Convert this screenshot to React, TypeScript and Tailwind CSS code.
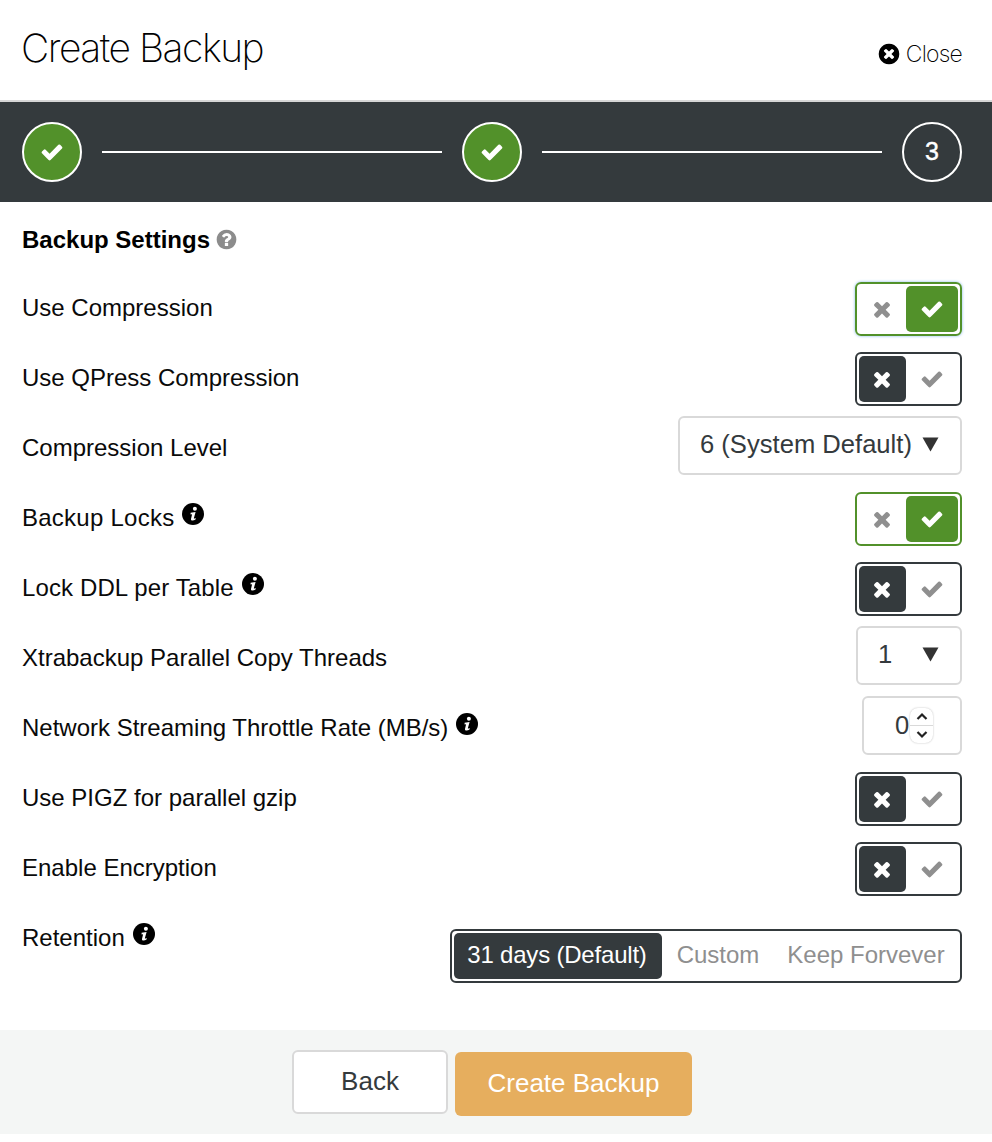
import React from 'react';

const CHECK = 'M1671 566q0 40-28 68l-724 724-136 136q-28 28-68 28t-68-28l-136-136-362-362q-28-28-28-68t28-68l136-136q28-28 68-28t68 28l294 295 656-657q28-28 68-28t68 28l136 136q28 28 28 68z';
const TIMES = 'M1490 1322q0 40-28 68l-136 136q-28 28-68 28t-68-28l-294-294-294 294q-28 28-68 28t-68-28l-136-136q-28-28-28-68t28-68l294-294-294-294q-28-28-28-68t28-68l136-136q28-28 68-28t68 28l294 294 294-294q28-28 68-28t68 28l136 136q28 28 28 68t-28 68l-294 294 294 294q28 28 28 68z';
const TIMES_CIRCLE = 'M1277 1122q0-26-19-45l-181-181 181-181q19-19 19-45 0-27-19-46l-90-90q-19-19-46-19-26 0-45 19l-181 181-181-181q-19-19-45-19-27 0-46 19l-90 90q-19 19-19 46 0 26 19 45l181 181-181 181q-19 19-19 45 0 27 19 46l90 90q19 19 46 19 26 0 45-19l181-181 181 181q19 19 45 19 27 0 46-19l90-90q19-19 19-46zm387-226q0 209-103 385.5t-279.5 279.5-385.5 103-385.5-103-279.5-279.5-103-385.5 103-385.5 279.5-279.5 385.5-103 385.5 103 279.5 279.5 103 385.5z';
const QUESTION_CIRCLE = 'M1024 1376v-192q0-14-9-23t-23-9h-192q-14 0-23 9t-9 23v192q0 14 9 23t23 9h192q14 0 23-9t9-23zm256-672q0-88-55.5-163t-138.5-116-170-41q-243 0-371 213-15 24 8 42l132 100q7 6 19 6 16 0 25-12 53-68 86-92 34-24 86-24 48 0 85.5 26t37.5 59q0 38-20 61t-68 45q-63 28-115.5 86.5t-52.5 125.5v36q0 14 9 23t23 9h192q14 0 23-9t9-23q0-19 21.5-49.5t54.5-49.5q32-18 49-28.5t46-35 44.5-48 28-60.5 12.5-81zm384 192q0 209-103 385.5t-279.5 279.5-385.5 103-385.5-103-279.5-279.5-103-385.5 103-385.5 279.5-279.5 385.5-103 385.5 103 279.5 279.5 103 385.5z';

const Fa: React.FC<{ d: string; size?: number; className?: string }> = ({ d, size = 24, className }) => (
  <svg width={size} height={size} viewBox="0 0 1792 1792" fill="currentColor" className={className}>
    <path d={d} />
  </svg>
);

// italic "i" in a disc, there is no matching glyph in the icon packages
const InfoIcon = () => (
  <svg width="22" height="22" viewBox="0 0 22 22" className="mb-[8px] shrink-0">
    <circle cx="11" cy="11" r="11" fill="#000" />
    <circle cx="12.9" cy="5.7" r="2" fill="#fff" />
    <path
      d="M8.6 9.7 L13.6 9 L11.9 15 C11.7 15.8 12.3 15.8 13.8 15 L13.5 16.6 C11.5 17.9 8.7 18.1 9 16 L10.1 11.3 L8.6 11.4 Z"
      fill="#fff"
    />
  </svg>
);

interface RowProps {
  label: string;
  info?: boolean;
  labelClass?: string;
  children: React.ReactNode;
}

const Row: React.FC<RowProps> = ({ label, info, labelClass, children }) => (
  <div className="flex h-[70px] justify-between">
    <div className="flex h-[70px] items-center gap-[8px] text-[24px] text-[#0a0a0a]">
      <span className={labelClass}>{label}</span>
      {info && <InfoIcon />}
    </div>
    {children}
  </div>
);

const Toggle: React.FC<{ on?: boolean; focused?: boolean }> = ({ on, focused }) => (
  <div
    className={
      on
        ? focused
          ? 'mt-[9px] flex h-[54px] w-[107px] rounded-[6px] border-2 border-[#52912a] p-[2px] shadow-[0_0_3px_#7db8e8]'
          : 'mt-[9px] flex h-[54px] w-[107px] rounded-[6px] border-2 border-[#52912a] p-[2px]'
        : 'mt-[9px] flex h-[54px] w-[107px] rounded-[6px] border-2 border-[#343a3d] p-[2px]'
    }
  >
    <div
      className={
        on
          ? 'flex w-[47px] items-center justify-center pr-[1px] text-[#8f8f8f]'
          : 'flex w-[47px] items-center justify-center rounded-[5px] bg-[#343a3d] pr-[1px] text-white'
      }
    >
      <Fa d={TIMES} className="mb-[1px]" />
    </div>
    <div
      className={
        on
          ? 'flex w-[52px] items-center justify-center rounded-[5px] bg-[#52912a] text-white'
          : 'flex w-[52px] items-center justify-center text-[#8f8f8f]'
      }
    >
      <Fa d={CHECK} className="mb-[1px]" />
    </div>
  </div>
);

const Triangle = () => (
  <svg width="17" height="15" viewBox="0 0 17 15" className="shrink-0">
    <path d="M0.5 0.5 H16.5 L8.5 14.5 Z" fill="#333" />
  </svg>
);

const Select: React.FC<{ value: string; width: string; gap: string }> = ({ value, width, gap }) => (
  <div className={`mt-[3px] flex h-[59px] items-center rounded-[6px] border-2 border-[#d9d9d9] pb-[2px] pl-[20px] text-[25.6px] text-[#343a3d] ${width} ${gap}`}>
    <span>{value}</span>
    <Triangle />
  </div>
);

const Stepper = () => (
  <div className="flex h-[100px] items-center gap-[20px] bg-[#343a3d] pl-[22px] pr-[30px]">
    <div className="flex h-[60px] w-[60px] items-center justify-center rounded-full border-2 border-white bg-[#52912a] text-white">
      <Fa d={CHECK} />
    </div>
    <div className="h-[2px] flex-1 bg-white" />
    <div className="flex h-[60px] w-[60px] items-center justify-center rounded-full border-2 border-white bg-[#52912a] text-white">
      <Fa d={CHECK} />
    </div>
    <div className="h-[2px] flex-1 bg-white" />
    <div className="flex h-[60px] w-[60px] items-center justify-center rounded-full border-2 border-white text-[25px] text-white [-webkit-text-stroke:0.4px_white]">
      3
    </div>
  </div>
);

export default function App() {
  return (
    <div className="h-[1142px] w-[992px] bg-white font-['Liberation_Sans',sans-serif]">
      {/* Header */}
      <div className="flex h-[102px] items-start justify-between border-b-2 border-[#d6d6d6] pl-[22px] pr-[30px]">
        <h1 className="-ml-[1px] mt-[24px] font-['Inter',sans-serif] text-[39px] font-extralight leading-[48px] tracking-[-1.5px] text-black">
          Create Backup
        </h1>
        <div className="mt-[40px] flex items-center gap-[5px] font-['Inter',sans-serif] text-[23px] font-extralight leading-[28px] tracking-[-0.8px] text-black">
          <Fa d={TIMES_CIRCLE} size={24} />
          <span>Close</span>
        </div>
      </div>

      <Stepper />

      {/* Settings */}
      <div className="pl-[22px] pr-[30px]">
        <div className="flex h-[71px] items-start gap-[5px] pt-[21px]">
          <span className="text-[24px] font-bold leading-[34px] text-black">Backup Settings</span>
          <Fa d={QUESTION_CIRCLE} size={23} className="mt-[5px] text-[#8c8c8c]" />
        </div>

        <Row label="Use Compression"><Toggle on focused /></Row>
        <Row label="Use QPress Compression"><Toggle /></Row>
        <Row label="Compression Level">
          <Select value="6 (System Default)" width="w-[284px]" gap="gap-[10px]" />
        </Row>
        <Row label="Backup Locks" info labelClass="tracking-[0.25px]"><Toggle on /></Row>
        <Row label="Lock DDL per Table" info labelClass="tracking-[0.12px]"><Toggle /></Row>
        <Row label="Xtrabackup Parallel Copy Threads">
          <Select value="1" width="w-[106px]" gap="gap-[30px]" />
        </Row>
        <Row label="Network Streaming Throttle Rate (MB/s)" info>
          <div className="mt-[3px] flex h-[59px] w-[100px] items-center rounded-[6px] border-2 border-[#d9d9d9] pl-[31px] text-[25.6px] text-[#343a3d]">
            <span>0</span>
            <div className="ml-[1px] flex h-[35px] w-[23px] flex-col items-center rounded-[8px] bg-white text-[#222] shadow-[0_0_2px_#bbb]">
              <svg width="14" height="17" viewBox="0 0 14 17" fill="none" stroke="currentColor" strokeWidth="2.2">
                <path d="M2.5 11 L7 6.5 L11.5 11" />
              </svg>
              <div className="h-[1px] w-full bg-[#d9d9d9]" />
              <svg width="14" height="17" viewBox="0 0 14 17" fill="none" stroke="currentColor" strokeWidth="2.2">
                <path d="M2.5 6 L7 10.5 L11.5 6" />
              </svg>
            </div>
          </div>
        </Row>
        <Row label="Use PIGZ for parallel gzip"><Toggle /></Row>
        <Row label="Enable Encryption"><Toggle /></Row>
        <div className="flex h-[70px] justify-between">
          <div className="flex h-[70px] items-center gap-[8px] text-[24px] text-[#0a0a0a]">
            <span>Retention</span>
            <InfoIcon />
          </div>
          <div className="mt-[26px] flex h-[54px] w-[512px] items-center rounded-[6px] border-2 border-[#343a3d] p-[2px] text-[24px] text-[#8f8f8f]">
            <div className="flex h-[46px] w-[208px] items-center justify-center rounded-[5px] bg-[#343a3d] pb-[2px] pr-[2px] tracking-[-0.2px] text-white">
              31 days (Default)
            </div>
            <div className="flex w-[112px] justify-center pb-[2px]">Custom</div>
            <div className="flex flex-1 justify-center pb-[2px]">Keep Forvever</div>
          </div>
        </div>
      </div>

      {/* Footer */}
      <div className="mt-[57px] flex h-[104px] items-start justify-center gap-[7px] bg-[#f4f6f5] pr-[8px] pt-[20px] text-[26px]">
        <button className="h-[64px] w-[156px] rounded-[6px] border-2 border-[#d9d9d9] bg-white pb-[2px] text-[#343a3d]">
          Back
        </button>
        <button className="mt-[2px] h-[64px] w-[237px] rounded-[6px] bg-[#e6ae5e] pb-[2px] text-white">
          Create Backup
        </button>
      </div>
    </div>
  );
}
